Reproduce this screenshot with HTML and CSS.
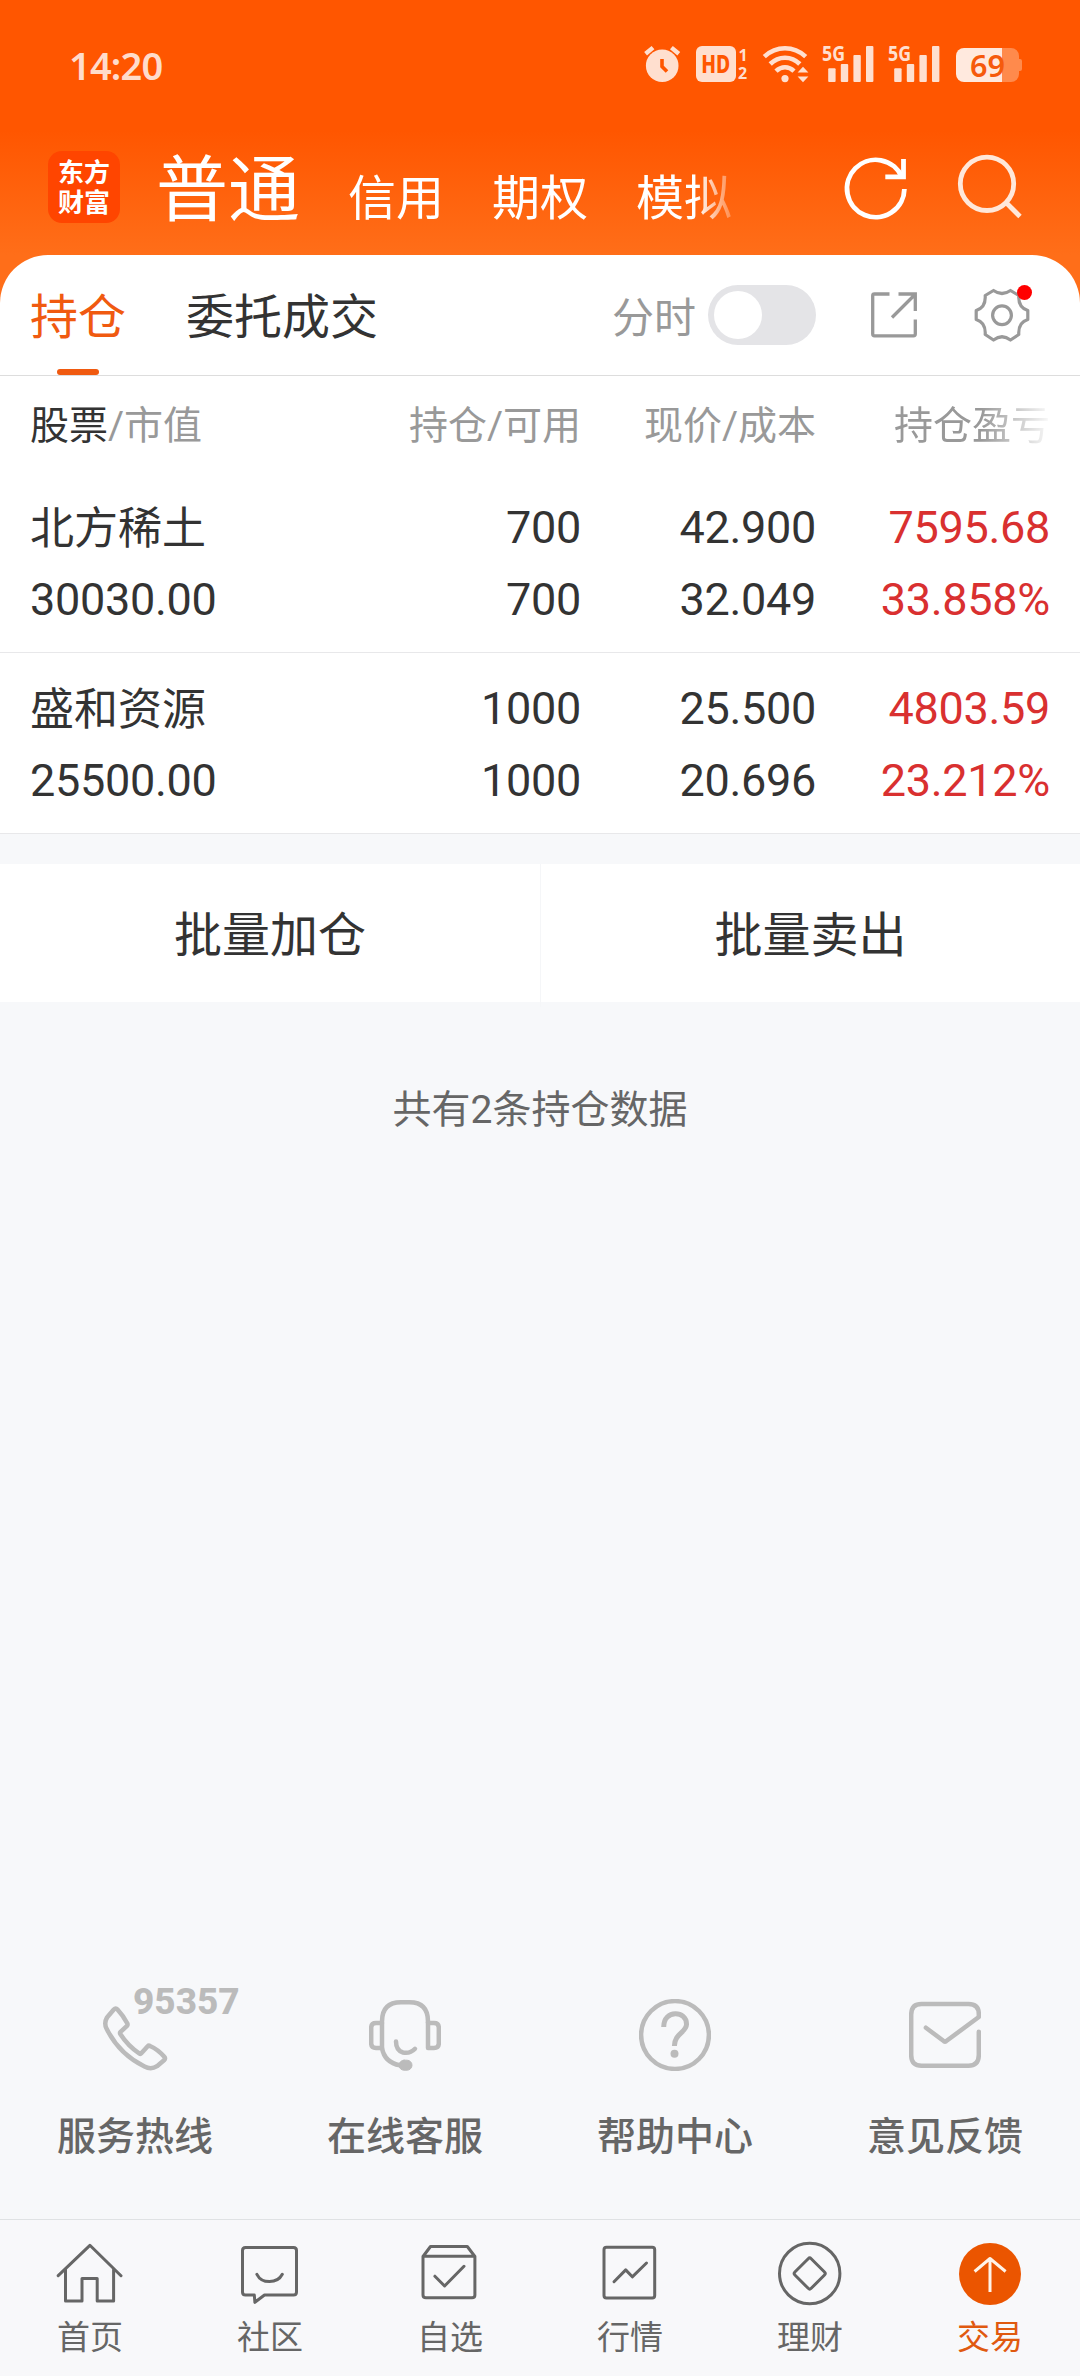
FILE: index.html
```html
<!DOCTYPE html>
<html lang="zh-CN">
<head>
<meta charset="utf-8">
<title>交易 - 持仓</title>
<link rel="stylesheet" href="styles.css">
</head>
<body>
<div class="app">
  <header class="top">
    <div class="status">
      <span class="clock">14:20</span>
      <div class="status-icons">
        <svg class="s-alarm" width="36" height="40" viewBox="0 0 36 40">
          <circle cx="18.2" cy="21.7" r="16.3" fill="#ffdfcf"/>
          <path d="M1.6 9.8 9 3.6M34.8 9.8 27.4 3.6" stroke="#ffdfcf" stroke-width="4.4" fill="none"/>
          <path d="M18 15v7.5l5 5" stroke="#ff5600" stroke-width="3.6" fill="none"/>
        </svg>
        <svg class="s-hd" width="52" height="40" viewBox="0 0 52 40">
          <rect y="2" width="40" height="36" rx="6" fill="#ffdfcf"/>
          <text x="5.3" y="29.2" textLength="29" lengthAdjust="spacingAndGlyphs" font-size="25.5" font-weight="800" fill="#ff5600">HD</text>
          <text x="42.5" y="16.8" font-size="16" font-weight="700" fill="#ffdfcf">1</text>
          <text x="42" y="34.8" font-size="16" font-weight="700" fill="#ffdfcf">2</text>
        </svg>
        <svg class="s-wifi" width="48" height="40" viewBox="0 0 48 40" fill="none" stroke="#ffdfcf" stroke-width="4.6">
          <path d="M2.3 12.6Q11.5 4.3 23 4.3T43.7 12.6"/>
          <path d="M8.2 20Q14.5 13.7 23 13.7T37.8 20"/>
          <path d="M14 27.2Q18 23.3 23 23.3T32 27.2"/>
          <circle cx="23" cy="34.6" r="3.6" fill="#ffdfcf" stroke="none"/>
          <path d="M41 22.8l5.4 5.6H35.6zM41 38.2l5.4-5.6H35.6z" fill="#ffdfcf" stroke="none"/>
        </svg>
        <svg class="s-sig" width="52" height="40" viewBox="0 0 52 40" fill="#ffdfcf">
          <text x="0" y="17" textLength="23" lengthAdjust="spacingAndGlyphs" font-size="21" font-weight="700">5G</text>
          <rect x="6.2" y="24.3" width="7.4" height="13.7" rx="1"/><rect x="18.8" y="20" width="7.4" height="18" rx="1"/>
          <rect x="31.4" y="11" width="7.4" height="27" rx="1"/><rect x="44" y="2" width="7.4" height="36" rx="1"/>
        </svg>
        <svg class="s-sig2" width="52" height="40" viewBox="0 0 52 40" fill="#ffdfcf">
          <text x="0" y="17" textLength="23" lengthAdjust="spacingAndGlyphs" font-size="21" font-weight="700">5G</text>
          <rect x="6.2" y="24.3" width="7.4" height="13.7" rx="1"/><rect x="18.8" y="20" width="7.4" height="18" rx="1"/>
          <rect x="31.4" y="11" width="7.4" height="27" rx="1"/><rect x="44" y="2" width="7.4" height="36" rx="1"/>
        </svg>
        <svg class="s-bat" width="66" height="40" viewBox="0 0 66 40">
          <path d="M46 4h9a8 8 0 0 1 8 8v3h1a2 2 0 0 1 2 2v8a2 2 0 0 1-2 2h-1v3a8 8 0 0 1-8 8h-9z" fill="#ff8a4c"/>
          <path d="M46 4H8a8 8 0 0 0-8 8v18a8 8 0 0 0 8 8h38z" fill="#ffe9de"/>
          <text x="14" y="32.7" textLength="35" lengthAdjust="spacingAndGlyphs" font-size="31" font-weight="600" fill="#f65a0c">69</text>
        </svg>
      </div>
    </div>
    <div class="titlebar">
      <div class="logo">东方<br>财富</div>
      <nav class="accounts">
        <span class="acct acct-on">普通</span><span class="acct">信用</span><span class="acct">期权</span><span class="acct">模拟</span>
      </nav>
      <svg class="refresh" width="72" height="72" viewBox="0 0 72 72" fill="none" stroke="#fff" stroke-width="4.8">
        <path d="M64.4 37A28.7 28.7 0 1 1 62 25"/><path d="M63.5 7v17.800H45.3"/>
      </svg>
      <svg class="search" width="72" height="72" viewBox="0 0 72 72" fill="none" stroke="#ffe8da" stroke-width="4.8">
        <circle cx="36" cy="31.8" r="26.7"/><path d="M55 50.5 69 64.5"/>
      </svg>
    </div>
  </header>

  <main class="sheet">
    <div class="tabs">
      <span class="tab tab-on">持仓</span>
      <span class="tab">委托成交</span>
      <span class="chart-label">分时</span>
      <span class="toggle"><i></i></span>
      <svg class="export" width="48" height="48" viewBox="0 0 48 48" fill="none" stroke="#999" stroke-width="3.3">
        <path d="M19.5 3H4.5Q2.7 3 2.7 4.800V43q0 1.800 1.800 1.800H43.500q1.800 0 1.800-1.800V28.500"/>
        <path d="M28.5 3H45.300V20M22 26.500 45 3.500"/>
      </svg>
      <div class="settings">
        <svg width="60" height="60" viewBox="0 0 60 60" fill="none" stroke="#999" stroke-width="3.2" stroke-linejoin="round">
          <path d="M21.5 5.5Q30 11.5 38.5 5.5L46.8 10.5Q46 22.5 55.8 25.5V34.5Q46 37.5 46.8 49.5L38.5 55Q30 48.5 21.5 55L13.2 49.5Q14 37.5 4.2 34.5V25.5Q14 22.5 13.2 10.5Z"/>
          <circle cx="30" cy="30.2" r="9.4"/>
        </svg>
        <i class="dot"></i>
      </div>
    </div>

    <div class="grid head">
      <span><b>股票</b>/市值</span><span>持仓/可用</span><span>现价/成本</span><span class="fade">持仓盈亏</span>
    </div>
    <div class="grid row">
      <span class="name">北方稀土</span><span>700</span><span>42.900</span><span class="up">7595.68</span>
      <span>30030.00</span><span>700</span><span>32.049</span><span class="up">33.858%</span>
    </div>
    <div class="grid row">
      <span class="name">盛和资源</span><span>1000</span><span>25.500</span><span class="up">4803.59</span>
      <span>25500.00</span><span>1000</span><span>20.696</span><span class="up">23.212%</span>
    </div>
  </main>

  <div class="batch"><span>批量加仓</span><span>批量卖出</span></div>
  <p class="count">共有2条持仓数据</p>

  <section class="services">
    <div class="service">
      <div class="service-icon">
        <svg width="72" height="72" viewBox="0 0 72 72">
          <path d="M14.8 10.5Q16.7 8.5 18.5 10.5Q24.5 17 28.2 24.2Q29 25.5 28 26.8L21.3 33.2Q20.7 34 21.3 35Q29 47 40.5 54.6Q41.5 55.2 42.3 54.3L48.7 47.3Q49.7 46.2 51 47Q59 50.5 65.3 57.8Q66.8 59.6 65 61.3L58 67.2Q52 71 45.5 67.5Q20 55 7.5 29.5Q4.800 24 8 18.500Z"/>
        </svg>
        <span class="hotline">95357</span>
      </div>
      <span>服务热线</span>
    </div>
    <div class="service">
      <div class="service-icon">
        <svg width="72" height="72" viewBox="0 0 72 72">
          <path d="M59 23.7V22.5Q59 3.3 40.5 3.3H32Q13 3.3 13 22.5V49Q15.5 63.5 31 66.3"/>
          <path d="M13 24H7Q2.2 24 2.2 28.5V44.5Q2.2 49 7 49H13M59 24H65Q69.8 24 69.8 28.5V44.5Q69.8 49 65 49H59V23"/>
          <path d="M27 42.5Q27 51.5 34 53.5Q41 55 46 49.8"/>
          <rect x="30" y="61.2" width="13" height="10" rx="5" fill="#bbb" stroke-width="1"/>
        </svg>
      </div>
      <span>在线客服</span>
    </div>
    <div class="service">
      <div class="service-icon">
        <svg width="72" height="72" viewBox="0 0 72 72">
          <circle cx="36" cy="36" r="33.9"/>
          <path stroke-linecap="butt" stroke-width="5" d="M24.7 28C24.7 10 48 11.5 47.5 25.5C47.2 33.5 35.4 34.5 35.4 47"/>
          <circle cx="35.5" cy="54.7" r="4" fill="#bbb" stroke="none"/>
        </svg>
      </div>
      <span>帮助中心</span>
    </div>
    <div class="service">
      <div class="service-icon">
        <svg width="72" height="72" viewBox="0 0 72 72">
          <path d="M69.8 32.7V56Q69.8 66.7 59.5 66.7H12.5Q2.2 66.7 2.2 56V15.7Q2.2 5 12.5 5H59.5Q69.8 5 69.8 15V18L37 42.3Q36 43 35 42.3L16.9 28.7"/>
        </svg>
      </div>
      <span>意见反馈</span>
    </div>
  </section>

  <nav class="bottom">
    <div class="item">
      <svg width="72" height="72" viewBox="0 0 72 72"><path d="M4.2 39.7 35.9 9.3 67 39.7M11.5 33.5V65H28V42.5H43.2V65H59.6V33.5"/></svg>
      <span>首页</span>
    </div>
    <div class="item">
      <svg width="72" height="72" viewBox="0 0 72 72"><path d="M11.5 11.5H59.5Q62.5 11.5 62.5 14.5V56Q62.5 59 59.5 59H30.5L20.9 66.3 20.3 59H11.5Q8.5 59 8.5 56V14.5Q8.5 11.5 11.5 11.5ZM22.9 38.3Q26.5 45.6 35.5 45.6T48.3 38.3"/></svg>
      <span>社区</span>
    </div>
    <div class="item">
      <svg width="72" height="72" viewBox="0 0 72 72"><path d="M9 20.5 16.5 10.5H53.3L60.9 20.5V59Q60.9 61.8 58 61.8H12Q9 61.8 9 59ZM9 20.2H60.9M20.9 40.2 30.6 50 50 30.3"/></svg>
      <span>自选</span>
    </div>
    <div class="item">
      <svg width="72" height="72" viewBox="0 0 72 72"><rect x="10" y="11.3" width="50.7" height="50.6" rx="2.5"/><path d="M20 45.7 31.7 33.9 38.3 40.8 52.5 27"/></svg>
      <span>行情</span>
    </div>
    <div class="item">
      <svg width="72" height="72" viewBox="0 0 72 72"><circle cx="35.7" cy="37.5" r="30.2"/><path d="M34.2 22.7Q35.7 21.2 37.2 22.7L50.5 36Q52 37.5 50.5 39L37.2 52.3Q35.7 53.8 34.2 52.3L20.9 39Q19.4 37.5 20.9 36Z"/></svg>
      <span>理财</span>
    </div>
    <div class="item item-on">
      <svg width="72" height="72" viewBox="0 0 72 72"><circle cx="36" cy="38" r="31" fill="#eb5500" stroke="none"/><path d="M20.6 35.5 36 22.5 51.6 35.5M36 22.5V56" stroke="#fff3e8" stroke-linecap="butt"/></svg>
      <span>交易</span>
    </div>
  </nav>
</div>
</body>
</html>
```

FILE: styles.css
```css
* { box-sizing: border-box; }

body {
  margin: 0;
  background: #f7f8fa;
  color: #333;
  font-family: Roboto, "Noto Sans CJK SC", sans-serif;
}

.app {
  width: 1080px;
  height: 2376px;
  display: flex;
  flex-direction: column;
}

/* Orange header; the white sheet overlaps its lower edge */
.top {
  flex: none;
  height: 315px;
  background: linear-gradient(#ff5600 130px, #ff6e19 255px);
}

.status {
  height: 130px;
  padding: 44px 58px 0 69px;
  display: flex;
  justify-content: space-between;
}

.clock {
  margin-top: -1px;
  font: 600 38px/44px "Noto Sans", sans-serif;
  letter-spacing: -0.8px;
  color: #ffdccb;
}

.status-icons {
  display: flex;
  font-family: "Noto Sans", sans-serif;
}
.status-icons svg { overflow: visible; }
.s-hd { margin-left: 16px; }
.s-wifi { margin-left: 14px; }
.s-sig { margin-left: 12px; }
.s-sig2 { margin-left: 14px; }
.s-bat { margin-left: 16px; }

.titlebar {
  display: flex;
  align-items: flex-start;
  padding: 21px 57px 0 48px;
}

.logo {
  width: 72px;
  height: 72px;
  padding-top: 5px;
  border-radius: 14px;
  background: #ff4500;
  color: #fff;
  font: 700 26px/30px "Noto Sans CJK SC", sans-serif;
  text-align: center;
}

.accounts {
  width: 590px;
  height: 96px;
  margin: -8px 94px 0 36px;
  display: flex;
  align-items: baseline;
  gap: 48px;
  white-space: nowrap;
  color: #fff;
  -webkit-mask-image: linear-gradient(90deg, #000 540px, transparent 588px);
  mask-image: linear-gradient(90deg, #000 540px, transparent 588px);
}
.acct { font-size: 48px; line-height: 96px; }
.acct-on { font-size: 72px; }

.refresh { margin: 1px 0 0; flex: none; }
.search { margin: 1px 0 0 39px; flex: none; }

.sheet {
  flex: none;
  margin-top: -60px;
  height: 579px;
  border-radius: 48px 48px 0 0;
  background: #fff;
}

.tabs {
  height: 121px;
  padding: 0 48px 0 30px;
  border-bottom: 1px solid #ddd;
  display: flex;
  align-items: center;
}
.tab {
  height: 120px;
  margin-right: 60px;
  font-size: 48px;
  line-height: 125px;
  position: relative;
}
.tab-on { color: #f05a10; }
.tab-on::after {
  content: "";
  position: absolute;
  left: 27px;
  bottom: 0;
  width: 42px;
  height: 6px;
  border-radius: 3px;
  background: #f05a10;
}
.chart-label {
  margin: -2px 0 0 auto;
  font-size: 42px;
  color: #999;
}
.toggle {
  width: 108px;
  height: 60px;
  margin: 0 54px 0 12px;
  padding: 6px;
  border-radius: 30px;
  background: #e4e4e7;
}
.toggle i {
  display: block;
  width: 48px;
  height: 48px;
  border-radius: 50%;
  background: #fff;
}
.export { flex: none; }
.settings {
  position: relative;
  width: 60px;
  height: 60px;
  margin-left: 54px;
}
.dot {
  position: absolute;
  top: 0;
  right: 0;
  width: 15px;
  height: 15px;
  border-radius: 50%;
  background: #f00;
}

.grid {
  display: grid;
  grid-template-columns: 300px 251px 235px 234px;
  padding: 0 30px;
  text-align: right;
}
.grid > :nth-child(4n + 1) { text-align: left; }

.head {
  height: 96px;
  line-height: 100px;
  font-size: 39px;
  color: #999;
}
.head b { font-weight: 400; color: #333; }
.fade {
  -webkit-mask-image: linear-gradient(90deg, #000 165px, transparent 238px);
  mask-image: linear-gradient(90deg, #000 165px, transparent 238px);
}

.row {
  height: 181px;
  padding-top: 20px;
  border-bottom: 1px solid #e8e8ea;
  font-size: 45px;
  letter-spacing: -0.3px;
  grid-auto-rows: 72px;
  line-height: 72px;
}
.name {
  font-size: 44px;
  line-height: 74px;
  letter-spacing: 0;
}
.up { color: #d93030; }

.batch {
  flex: none;
  height: 138px;
  margin-top: 30px;
  background: #fff;
  display: grid;
  grid-template-columns: 1fr 1fr;
  text-align: center;
  font-size: 48px;
  line-height: 143px;
}
.batch span + span { border-left: 1px solid #f5f6f8; }

.count {
  margin: 79px 0 0;
  text-align: center;
  font-size: 39px;
  line-height: 58px;
  color: #666;
}

.services {
  margin-top: auto;
  height: 220px;
  display: grid;
  grid-template-columns: repeat(4, 1fr);
  font-size: 39px;
  font-weight: 500;
  line-height: 60px;
  color: #666;
}
.service {
  display: flex;
  flex-direction: column;
  align-items: center;
  gap: 36px;
}
.service-icon {
  position: relative;
  width: 72px;
  height: 72px;
}
.service-icon svg {
  display: block;
  fill: none;
  stroke: #bbb;
  stroke-width: 4.5px;
  stroke-linecap: round;
  stroke-linejoin: round;
}
.hotline {
  position: absolute;
  left: 34px;
  top: -17px;
  font-size: 37px;
  font-weight: 800;
  line-height: 40px;
  color: #bbb;
}

.bottom {
  flex: none;
  height: 157px;
  padding-top: 16px;
  border-top: 1px solid #e0e2e4;
  background: #f8f8fa;
  display: grid;
  grid-template-columns: repeat(6, 1fr);
}
.item {
  display: flex;
  flex-direction: column;
  align-items: center;
  font-size: 33px;
  line-height: 48px;
  gap: 6px;
  color: #666;
}
.item svg {
  fill: none;
  stroke: #666;
  stroke-width: 3;
  stroke-linecap: round;
  stroke-linejoin: round;
}
.item-on { color: #e0590f; }
```
